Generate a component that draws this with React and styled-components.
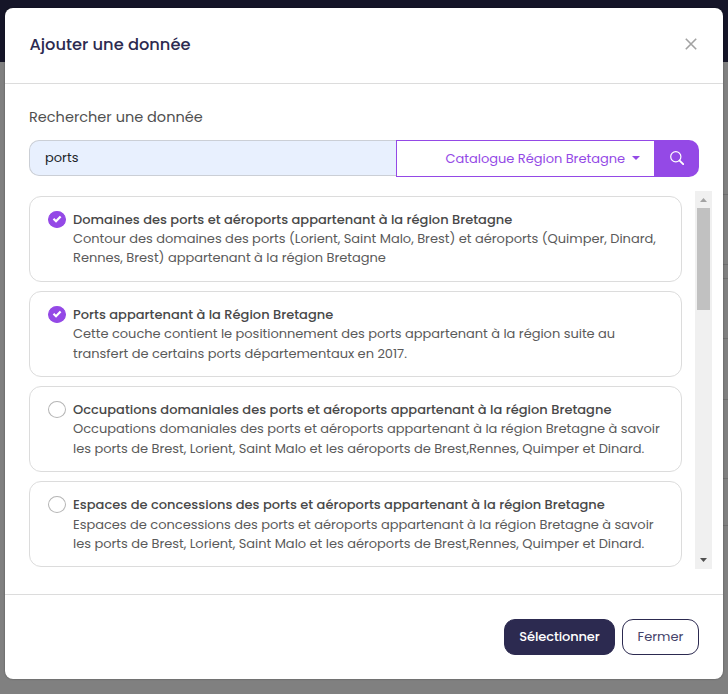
import React from 'react';
import styled, { createGlobalStyle } from 'styled-components';

const purple = '#9449e6';
const navy = '#2c2a50';
const line = '#dcdcdc';

const GlobalStyle = createGlobalStyle`
  *, *::before, *::after { box-sizing: border-box; }
  body {
    margin: 0;
    font-family: Poppins, Inter, "Open Sans", sans-serif;
    font-feature-settings: "cv11";
    font-size: 13px;
    line-height: 19.5px;
    color: #4f4f4f;
    overflow: hidden;
  }
  button, input { font: inherit; font-feature-settings: inherit; }
`;

const Backdrop = styled.div`
  width: 728px;
  height: 694px;
  padding: 8px 5px 15px;
  background:
    linear-gradient(#6f6f6f, #6f6f6f) 723px 194px / 5px 1px no-repeat,
    linear-gradient(#6f6f6f, #6f6f6f) 723px 264px / 5px 1px no-repeat,
    linear-gradient(#6f6f6f, #6f6f6f) 723px 278px / 5px 1px no-repeat,
    linear-gradient(#6f6f6f, #6f6f6f) 723px 338px / 5px 1px no-repeat,
    linear-gradient(#6f6f6f, #6f6f6f) 723px 399px / 5px 1px no-repeat,
    linear-gradient(#6f6f6f, #6f6f6f) 723px 478px / 5px 1px no-repeat,
    linear-gradient(#6f6f6f, #6f6f6f) 723px 525px / 5px 1px no-repeat,
    linear-gradient(#151528 62px, #808080 62px);
`;

const Modal = styled.section`
  height: 671px;
  display: flex;
  flex-direction: column;
  background: #fff;
  border-radius: 8px;
  box-shadow: 0 0 2px rgba(0, 0, 0, 0.4);
`;

const Header = styled.header`
  height: 76px;
  flex: none;
  display: flex;
  align-items: center;
  justify-content: space-between;
  padding: 0 25px 2px 24.5px;
  border-bottom: 1px solid ${line};
`;

const Title = styled.h1`
  margin: 0;
  font-size: 16.25px;
  line-height: 24px;
  font-weight: 500;
  color: ${navy};
`;

const CloseButton = styled.button`
  width: 14px;
  height: 14px;
  margin-bottom: 1px;
  padding: 0;
  border: 0;
  background: none;
  color: #a2a2a2;
  display: grid;
  place-items: center;
`;

const Body = styled.div`
  flex: 1;
  min-height: 0;
  padding: 22px 11px 0 24px;
`;

const Label = styled.label`
  display: block;
  height: 22px;
  font-size: 14.5px;
  line-height: 22px;
`;

const SearchGroup = styled.div`
  display: flex;
  align-items: flex-start;
  width: 670px;
  margin-top: 12px;
`;

const SearchInput = styled.input`
  width: 367px;
  height: 36px;
  padding: 0 15px 1px;
  border: 1px solid #cbcfd6;
  border-right: 0;
  border-radius: 10px 0 0 10px;
  background: #e8f0fe;
  color: #212529;
  outline: none;
`;

const CatalogButton = styled.button`
  width: 259px;
  height: 37px;
  padding: 0 14px 0 0;
  display: flex;
  align-items: center;
  justify-content: flex-end;
  gap: 7px;
  border: 1px solid ${purple};
  background: #fff;
  color: ${purple};
  letter-spacing: -0.03px;
  white-space: nowrap;
`;

const Caret = styled.span`
  border: 4px solid transparent;
  border-top-color: currentColor;
  border-bottom: 0;
  margin-bottom: 2px;
`;

const SearchButton = styled.button`
  width: 44px;
  height: 37px;
  padding: 0 1px 1px 0;
  display: grid;
  place-items: center;
  border: 0;
  border-radius: 0 10px 10px 0;
  background: ${purple};
  color: #fff;
`;

const ResultsPane = styled.div`
  display: flex;
  justify-content: space-between;
  height: 378px;
  margin-top: 14px;
`;

const Results = styled.ul`
  width: 653px;
  margin: 0;
  padding: 4.6px 0 0;
  list-style: none;
  display: flex;
  flex-direction: column;
  gap: 9.25px;
`;

const Card = styled.li`
  height: 86px;
  flex: none;
  display: flex;
  gap: 7px;
  padding: 12px 18px 0;
  border: 1px solid ${line};
  border-radius: 12px;
`;

const Radio = styled.span`
  width: 18px;
  height: 17px;
  flex: none;
  margin-top: 2px;
  display: grid;
  place-items: center;
  border-radius: 50%;
  border: 1px solid ${p => (p.$checked ? purple : '#b5b5b5')};
  background: ${p => (p.$checked ? purple : '#fff')};
  color: #fff;
`;

const CardText = styled.div`
  padding-top: 1px;
`;

const CardTitle = styled.h2`
  margin: 0;
  font-size: 13px;
  line-height: 19.3px;
  font-weight: 500;
  letter-spacing: 0.013px;
  color: #484848;
`;

const CardDescription = styled.p`
  margin: 0;
  width: 592px;
  letter-spacing: -0.023px;
  color: #5a5a5a;
`;

const ScrollTrack = styled.div`
  width: 17px;
  display: flex;
  flex-direction: column;
  align-items: center;
  background: #f0f0f0;
`;

const ScrollArrow = styled.svg`
  width: 17px;
  height: 17px;
  flex: none;
  fill: ${p => (p.$active ? '#505050' : '#a3a3a3')};
`;

const ScrollThumb = styled.div`
  width: 13px;
  height: 102px;
  margin-bottom: auto;
  background: #c1c1c1;
`;

const Footer = styled.footer`
  height: 85px;
  flex: none;
  display: flex;
  justify-content: flex-end;
  align-items: flex-start;
  gap: 7px;
  padding: 24px 24px 0;
  border-top: 1px solid ${line};
`;

const ActionButton = styled.button`
  width: ${p => (p.$primary ? 111 : 77)}px;
  height: 36px;
  padding: 0 0 1px;
  border: 1px solid ${navy};
  border-radius: 11px;
  background: ${p => (p.$primary ? navy : '#fff')};
  color: ${p => (p.$primary ? '#fff' : '#45436a')};
  font-weight: ${p => (p.$primary ? 500 : 400)};
  letter-spacing: ${p => (p.$primary ? '-0.1px' : 'normal')};
`;

const results = [
  {
    checked: true,
    title: 'Domaines des ports et aéroports appartenant à la région Bretagne',
    description:
      'Contour des domaines des ports (Lorient, Saint Malo, Brest) et aéroports (Quimper, Dinard, Rennes, Brest) appartenant à la région Bretagne',
  },
  {
    checked: true,
    title: 'Ports appartenant à la Région Bretagne',
    description:
      'Cette couche contient le positionnement des ports appartenant à la région suite au transfert de certains ports départementaux en 2017.',
  },
  {
    checked: false,
    title: 'Occupations domaniales des ports et aéroports appartenant à la région Bretagne',
    description:
      'Occupations domaniales des ports et aéroports appartenant à la région Bretagne à savoir les ports de Brest, Lorient, Saint Malo et les aéroports de Brest,Rennes, Quimper et Dinard.',
  },
  {
    checked: false,
    title: 'Espaces de concessions des ports et aéroports appartenant à la région Bretagne',
    description:
      'Espaces de concessions des ports et aéroports appartenant à la région Bretagne à savoir les ports de Brest, Lorient, Saint Malo et les aéroports de Brest,Rennes, Quimper et Dinard.',
  },
];

function Result({ checked, title, description }) {
  return (
    <Card>
      <Radio $checked={checked}>
        {checked && (
          <svg width="10" height="8" viewBox="0 0 10 8" fill="none" stroke="currentColor" strokeWidth="2.2">
            <path d="M1.5 3.8 4 6.2 8.6 1.4" />
          </svg>
        )}
      </Radio>
      <CardText>
        <CardTitle>{title}</CardTitle>
        <CardDescription>{description}</CardDescription>
      </CardText>
    </Card>
  );
}

export default function App() {
  return (
    <>
      <GlobalStyle />
      <Backdrop>
        <Modal role="dialog">
          <Header>
            <Title>Ajouter une donnée</Title>
            <CloseButton aria-label="Fermer">
              <svg width="12" height="12" viewBox="0 0 12 12" stroke="currentColor" strokeWidth="1.6">
                <path d="M0.8 0.8 11.2 11.2M11.2 0.8 0.8 11.2" />
              </svg>
            </CloseButton>
          </Header>
          <Body>
            <Label htmlFor="search">Rechercher une donnée</Label>
            <SearchGroup>
              <SearchInput id="search" defaultValue="ports" />
              <CatalogButton>
                Catalogue Région Bretagne
                <Caret />
              </CatalogButton>
              <SearchButton aria-label="Rechercher">
                <svg width="14" height="14" viewBox="0 0 14 14" fill="none" stroke="currentColor">
                  <circle cx="5.8" cy="5.8" r="5.1" strokeWidth="1.2" />
                  <path d="M9.6 9.6 13.2 13.1" strokeWidth="1.9" strokeLinecap="round" />
                </svg>
              </SearchButton>
            </SearchGroup>
            <ResultsPane>
              <Results>
                {results.map(item => (
                  <Result key={item.title} {...item} />
                ))}
              </Results>
              <ScrollTrack>
                <ScrollArrow viewBox="0 0 17 17"><path d="M5 11 8.5 7 12 11Z" /></ScrollArrow>
                <ScrollThumb />
                <ScrollArrow $active viewBox="0 0 17 17"><path d="M5 6 8.5 10 12 6Z" /></ScrollArrow>
              </ScrollTrack>
            </ResultsPane>
          </Body>
          <Footer>
            <ActionButton $primary>Sélectionner</ActionButton>
            <ActionButton>Fermer</ActionButton>
          </Footer>
        </Modal>
      </Backdrop>
    </>
  );
}
